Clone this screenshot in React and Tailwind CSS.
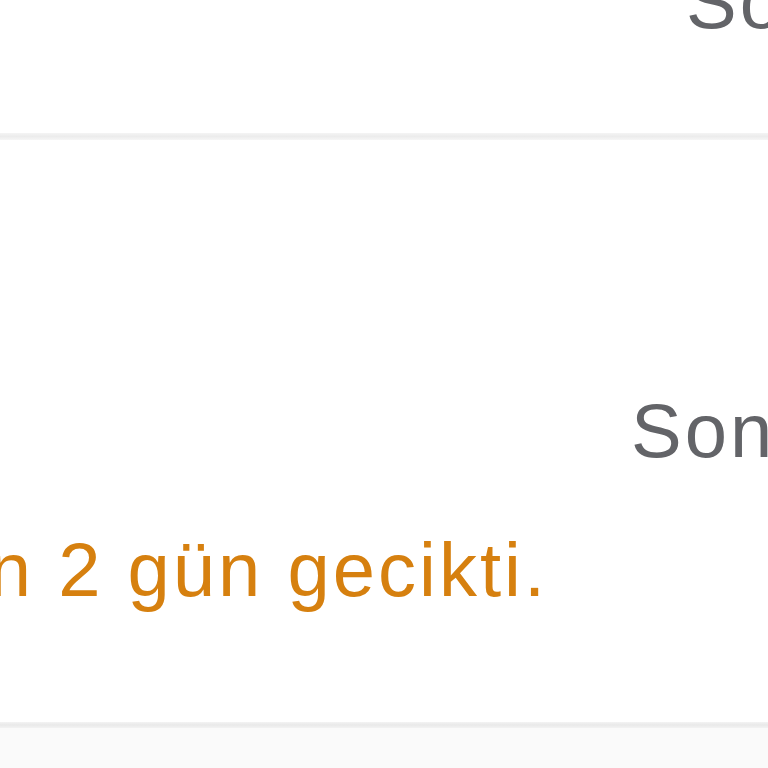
import React from "react";

const font = { fontFamily: '"Liberation Sans", Arial, sans-serif' };

function DueRow({ offset, children }) {
  return (
    <div className="flex items-start">
      <div className={`${offset} shrink-0`} />
      <p className="shrink-0 whitespace-nowrap text-[76px] leading-[72px] tracking-[3px] text-[#636468]">{children}</p>
    </div>
  );
}

export default function App() {
  return (
    <div style={font} className="w-[768px] h-[768px] overflow-hidden bg-[#fbfbfb]">
      <div className="-mt-[34px] bg-white pb-[95px]">
        <DueRow offset="w-[686px]">Son teslim: 12 Mart</DueRow>
      </div>
      <div className="h-[7px] bg-gradient-to-b from-[#f4f4f4] via-[#ececec] to-[#f6f6f6]" />
      <div className="bg-white pt-[255px] pb-[116px]">
        <DueRow offset="w-[631px]">Son teslim: 8 Mart</DueRow>
        <div className="flex justify-end w-[548px] mt-[67px]">
          <p className="shrink-0 whitespace-nowrap text-[76px] leading-[72px] tracking-[3px] text-[#d6800f]">
            Teslim tarihinden 2 gün gecikti.
          </p>
        </div>
      </div>
      <div className="h-[6px] bg-gradient-to-b from-[#f3f3f3] via-[#e9e9e9] to-[#f3f3f3]" />
      <div className="h-[60px] bg-[#fafafa]" />
    </div>
  );
}
